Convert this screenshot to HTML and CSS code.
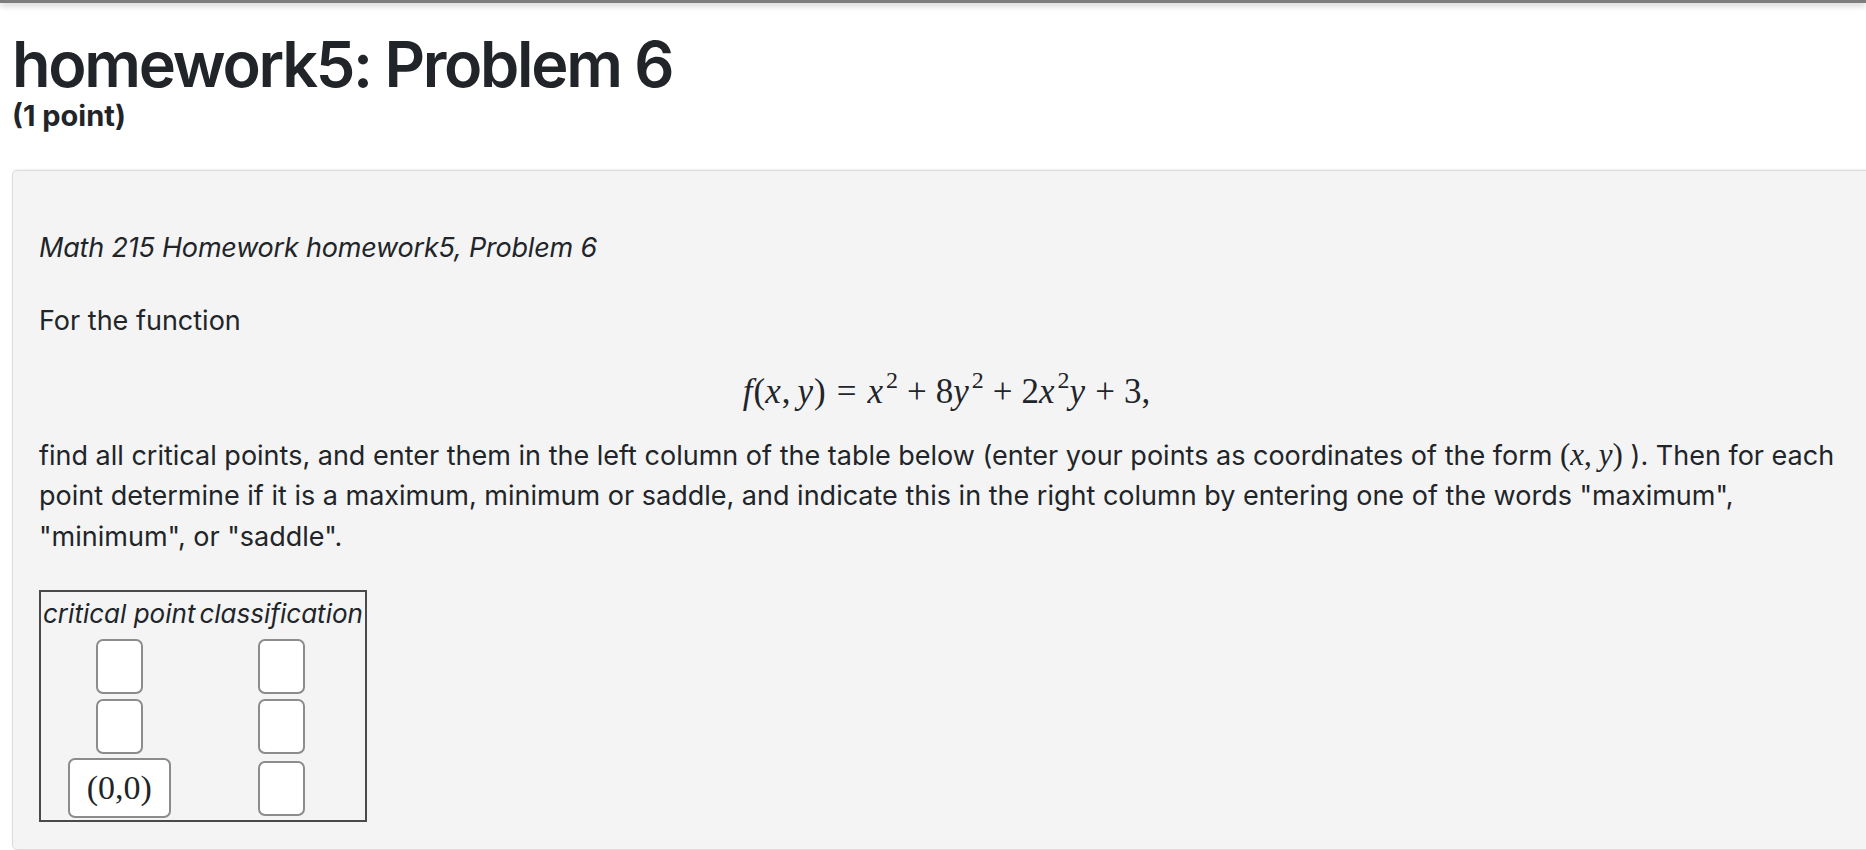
FILE: index.html
```html
<!DOCTYPE html>
<html lang="en">
<head>
    <meta charset="UTF-8">
    <meta name="viewport" content="width=device-width, initial-scale=1.0">
    <title>homework5: Problem 6</title>
<link rel="stylesheet" href="styles.css">
</head>
<body>
    <div class="top-bar"></div>

    <!-- Problem Header -->
    <header class="problem-header">
        <h1>homework5: Problem 6</h1>
        <div class="problem-value">(1 point)</div>
    </header>

    <!-- Problem Body -->
    <div class="problem-content">
        <p class="problem-source">Math 215 Homework homework5, Problem 6</p>

        <p class="intro">For the function</p>

        <div class="display-math"><span class="mi">f</span><span class="mo">(</span><span class="mi">x</span><span class="mo comma">,</span><span class="mi">y</span><span class="mo">)</span><span class="rel">=</span><span class="mi">x</span><sup>2</sup><span class="bin">+</span><span class="mn">8</span><span class="mi">y</span><sup>2</sup><span class="bin">+</span><span class="mn">2</span><span class="mi">x</span><sup>2</sup><span class="mi">y</span><span class="bin">+</span><span class="mn">3</span><span class="mo">,</span></div>

        <p class="instructions">find all critical points, and enter them in the left column of the table below (enter your points as coordinates of the form <span class="inline-math"><span class="mo">(</span><span class="mi">x</span><span class="mo comma">,</span><span class="mi">y</span><span class="mo">)</span></span> ). Then for each point determine if it is a maximum, minimum or saddle, and indicate this in the right column by entering one of the words "maximum", "minimum", or "saddle".</p>

        <table class="answer-table">
            <tr>
                <th>critical point</th>
                <th>classification</th>
            </tr>
            <tr>
                <td><input type="text" class="answer-box"></td>
                <td><input type="text" class="answer-box"></td>
            </tr>
            <tr>
                <td><input type="text" class="answer-box"></td>
                <td><input type="text" class="answer-box"></td>
            </tr>
            <tr>
                <td><input type="text" class="answer-box filled" value="(0,0)"></td>
                <td><input type="text" class="answer-box"></td>
            </tr>
        </table>
    </div>
</body>
</html>
```

FILE: styles.css
```css
/* General Styling */
body {
    font-family: 'Inter', 'Noto Sans', sans-serif;
    color: #212529;
    background-color: #ffffff;
    margin: 0;
    overflow: hidden;
}

.top-bar {
    height: 3px;
    background-color: #7d7d7d;
    box-shadow: 0 2px 6px rgba(0, 0, 0, 0.3);
}

/* Header */
.problem-header {
    padding: 27px 12px 0 12px;
}

.problem-header h1 {
    font-size: 63px;
    font-weight: 600;
    line-height: 1.1;
    letter-spacing: -2.3px;
    margin: 0;
}

.problem-value {
    font-size: 29px;
    font-weight: 700;
    line-height: 34px;
}

/* Problem box */
.problem-content {
    width: 1880px;
    height: 680px;
    margin: 37px 0 0 12px;
    padding: 57px 0 0 26px;
    background-color: #f4f4f4;
    border: 1px solid #dcdcdc;
    border-radius: 5px;
    box-shadow: 0 -1px 2px rgba(0, 0, 0, 0.06);
    font-size: 27px;
    line-height: 40.5px;
    box-sizing: border-box;
}

.problem-content p {
    margin: 0;
    width: 1815px;
}

.problem-source {
    font-style: italic;
    letter-spacing: -0.2px;
}

.intro {
    margin-top: 32px !important;
}

/* Math */
.display-math {
    width: 1815px;
    height: 40.5px;
    text-align: center;
    margin: 24px 0 30px 0;
    font-family: 'Liberation Serif', 'DejaVu Serif', serif;
    font-size: 35px;
    line-height: 1;
    padding-top: 3px;
    box-sizing: border-box;
    white-space: nowrap;
}

.mi {
    font-style: italic;
}

.mo, .mn, .rel, .bin {
    font-style: normal;
}

.display-math .mi {
    margin-right: 1px;
}

.comma {
    margin-right: 7px;
}

.display-math .rel {
    margin: 0 11px;
}

.display-math .bin {
    margin: 0 9px;
}

sup {
    font-size: 24px;
    line-height: 1;
    vertical-align: 15px;
    margin-left: 2px;
}

.inline-math {
    font-family: 'Liberation Serif', 'DejaVu Serif', serif;
    font-size: 31px;
    line-height: 1;
}

/* Answer table */
.answer-table {
    margin-top: 33px;
    border: 2px solid #4a4a4a;
    border-collapse: collapse;
}

.answer-table th {
    font-style: italic;
    font-weight: 400;
    font-size: 26px;
    line-height: 44px;
    padding: 0 2px;
}

.answer-table td {
    text-align: center;
    padding: 2px 0;
    height: 60px;
    box-sizing: border-box;
}

.answer-box {
    width: 47px;
    height: 55px;
    box-sizing: border-box;
    border: 2px solid #8c8c8c;
    border-radius: 7px;
    background-color: #ffffff;
    font-family: 'Liberation Serif', serif;
    font-size: 34px;
    color: #212529;
    text-align: center;
    padding: 0;
    vertical-align: middle;
}

.answer-box.filled {
    width: 103px;
    height: 60px;
}
```
